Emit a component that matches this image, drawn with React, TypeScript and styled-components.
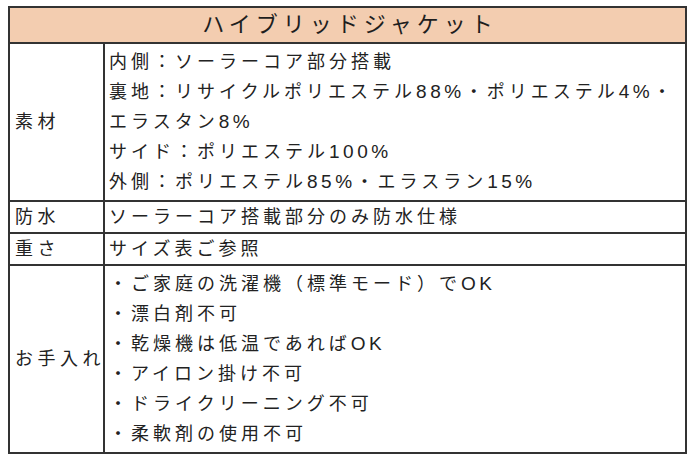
import React from 'react';
import styled, {createGlobalStyle} from 'styled-components';

const GlobalStyle = createGlobalStyle`
  html, body {
    margin: 0;
    padding: 0;
    background: #fff;
  }
  body {
    font-family: 'Liberation Sans', 'Noto Sans CJK JP', sans-serif;
    color: #222;
  }
`;

type Row = {
  label: string;
  lines: string[];
  pad: number;
};

const rows: Row[] = [
  {
    label: '素材',
    pad: 3,
    lines: [
      '内側：ソーラーコア部分搭載',
      '裏地：リサイクルポリエステル88%・ポリエステル4%・',
      'エラスタン8%',
      'サイド：ポリエステル100%',
      '外側：ポリエステル85%・エラスラン15%',
    ],
  },
  {label: '防水', pad: 0, lines: ['ソーラーコア搭載部分のみ防水仕様']},
  {label: '重さ', pad: 0, lines: ['サイズ表ご参照']},
  {
    label: 'お手入れ',
    pad: 3,
    lines: [
      '・ご家庭の洗濯機（標準モード）でOK',
      '・漂白剤不可',
      '・乾燥機は低温であればOK',
      '・アイロン掛け不可',
      '・ドライクリーニング不可',
      '・柔軟剤の使用不可',
    ],
  },
];

const Page = styled.div`
  padding: 6px 0 0 8px;
`;

const Table = styled.table`
  width: 679px;
  border-collapse: collapse;
  table-layout: fixed;
`;

const Title = styled.th`
  height: 34px;
  padding: 0;
  background: #f3cdb0;
  border: 2px solid #333;
  font-family: 'Liberation Serif', 'Noto Sans CJK JP', serif;
  font-weight: 400;
  font-size: 22px;
  line-height: 1;
  letter-spacing: 5px;
  text-indent: 5px;
  color: #1e1e1e;
`;

const Label = styled.td`
  padding: 0 0 0 5px;
  border: 2px solid #333;
  font-size: 18px;
  line-height: 1;
  letter-spacing: 4.5px;
  white-space: nowrap;
  overflow: visible;
  vertical-align: middle;
`;

const Body = styled.td<{$pad: number}>`
  padding: ${p => p.$pad}px 0 ${p => p.$pad}px 4px;
  border: 2px solid #333;
  vertical-align: middle;
`;

const Line = styled.div`
  height: 30px;
  font-size: 18px;
  line-height: 30px;
  letter-spacing: 4px;
  white-space: nowrap;
`;

// latin runs (digits, %, OK) are set a touch larger than the kana
const Latin = styled.span`
  font-size: 19px;
  letter-spacing: 3.5px;
`;

const renderLine = (text: string) =>
  text.split(/([0-9A-Z%]+)/).map((part, i) =>
    /^[0-9A-Z%]+$/.test(part) ? <Latin key={i}>{part}</Latin> : part
  );

export default function App() {
  return (
    <Page>
      <GlobalStyle />
      <Table>
        <colgroup>
          <col style={{width: 95}} />
          <col />
        </colgroup>
        <thead>
          <tr>
            <Title colSpan={2}>ハイブリッドジャケット</Title>
          </tr>
        </thead>
        <tbody>
          {rows.map(row => (
            <tr key={row.label}>
              <Label>{row.label}</Label>
              <Body $pad={row.pad}>
                {row.lines.map((line, i) => (
                  <Line key={i}>{renderLine(line)}</Line>
                ))}
              </Body>
            </tr>
          ))}
        </tbody>
      </Table>
    </Page>
  );
}
